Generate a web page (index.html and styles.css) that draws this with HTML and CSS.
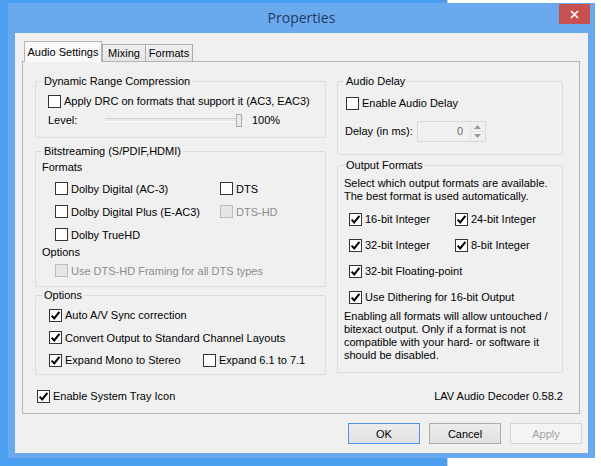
FILE: index.html
```html
<!DOCTYPE html>
<html>
<head>
<meta charset="utf-8">
<title>Properties</title>
<link rel="stylesheet" href="styles.css">
</head>
<body>
<div class="desk-back"></div>
<div class="window">
  <div class="titlebar">
    <span></span>
    <div class="title">Properties</div>
    <div class="close"><svg width="9" height="9" viewBox="0 0 9 9"><path d="M1 1L8 8M8 1L1 8" stroke="#fff" stroke-width="1.7" fill="none"/></svg></div>
  </div>
  <div class="panel">
    <div class="tabs">
      <div class="tab active">Audio Settings</div>
      <div class="tab mixing">Mixing</div>
      <div class="tab formats">Formats</div>
    </div>
    <div class="page">
      <div class="columns">
        <div class="col col-left">
          <div class="group g-drc">
            <div class="gtitle">Dynamic Range Compression</div>
            <div class="row r-drc"><span class="box"></span><span>Apply DRC on formats that support it (AC3, EAC3)</span></div>
            <div class="row r-level">
              <span class="lvl-label">Level:</span>
              <div class="slider"><div class="track"></div><div class="thumb"></div></div>
              <span class="lvl-val">100%</span>
            </div>
          </div>
          <div class="group g-bits">
            <div class="gtitle">Bitstreaming (S/PDIF,HDMI)</div>
            <div class="label">Formats</div>
            <div class="grid bits-grid">
              <div class="row"><span class="box"></span><span>Dolby Digital (AC-3)</span></div>
              <div class="row"><span class="box"></span><span>DTS</span></div>
              <div class="row"><span class="box"></span><span>Dolby Digital Plus (E-AC3)</span></div>
              <div class="row disabled"><span class="box"></span><span>DTS-HD</span></div>
              <div class="row"><span class="box"></span><span>Dolby TrueHD</span></div>
            </div>
            <div class="label">Options</div>
            <div class="row r-framing disabled"><span class="box"></span><span>Use DTS-HD Framing for all DTS types</span></div>
          </div>
          <div class="group g-opts">
            <div class="gtitle">Options</div>
            <div class="row r-o1"><span class="box checked"><svg viewBox="0 0 11 11" width="11" height="11"><path d="M1.6 5.6L4.2 8.4L9.4 1.8" stroke="#000" stroke-width="2" fill="none"/></svg></span><span>Auto A/V Sync correction</span></div>
            <div class="row r-o2"><span class="box checked"><svg viewBox="0 0 11 11" width="11" height="11"><path d="M1.6 5.6L4.2 8.4L9.4 1.8" stroke="#000" stroke-width="2" fill="none"/></svg></span><span>Convert Output to Standard Channel Layouts</span></div>
            <div class="grid opts-grid r-o3">
              <div class="row"><span class="box checked"><svg viewBox="0 0 11 11" width="11" height="11"><path d="M1.6 5.6L4.2 8.4L9.4 1.8" stroke="#000" stroke-width="2" fill="none"/></svg></span><span>Expand Mono to Stereo</span></div>
              <div class="row"><span class="box"></span><span>Expand 6.1 to 7.1</span></div>
            </div>
          </div>
        </div>
        <div class="col col-right">
          <div class="group g-delay">
            <div class="gtitle">Audio Delay</div>
            <div class="row r-delay1"><span class="box"></span><span>Enable Audio Delay</span></div>
            <div class="row r-delay2">
              <span class="delay-label">Delay (in ms):</span>
              <div class="spin">
                <span class="spin-val">0</span>
                <div class="spin-btns">
                  <div class="sb"><svg width="7" height="4" viewBox="0 0 7 4"><path d="M3.5 0L7 4H0Z" fill="#9a9a9a"/></svg></div>
                  <div class="sb"><svg width="7" height="4" viewBox="0 0 7 4"><path d="M0 0H7L3.5 4Z" fill="#9a9a9a"/></svg></div>
                </div>
              </div>
            </div>
          </div>
          <div class="group g-out">
            <div class="gtitle">Output Formats</div>
            <div class="desc desc1">Select which output formats are available.<br>The best format is used automatically.</div>
            <div class="grid out-grid">
              <div class="row"><span class="box checked"><svg viewBox="0 0 11 11" width="11" height="11"><path d="M1.6 5.6L4.2 8.4L9.4 1.8" stroke="#000" stroke-width="2" fill="none"/></svg></span><span>16-bit Integer</span></div>
              <div class="row"><span class="box checked"><svg viewBox="0 0 11 11" width="11" height="11"><path d="M1.6 5.6L4.2 8.4L9.4 1.8" stroke="#000" stroke-width="2" fill="none"/></svg></span><span>24-bit Integer</span></div>
              <div class="row"><span class="box checked"><svg viewBox="0 0 11 11" width="11" height="11"><path d="M1.6 5.6L4.2 8.4L9.4 1.8" stroke="#000" stroke-width="2" fill="none"/></svg></span><span>32-bit Integer</span></div>
              <div class="row"><span class="box checked"><svg viewBox="0 0 11 11" width="11" height="11"><path d="M1.6 5.6L4.2 8.4L9.4 1.8" stroke="#000" stroke-width="2" fill="none"/></svg></span><span>8-bit Integer</span></div>
              <div class="row span2"><span class="box checked"><svg viewBox="0 0 11 11" width="11" height="11"><path d="M1.6 5.6L4.2 8.4L9.4 1.8" stroke="#000" stroke-width="2" fill="none"/></svg></span><span>32-bit Floating-point</span></div>
              <div class="row span2"><span class="box checked"><svg viewBox="0 0 11 11" width="11" height="11"><path d="M1.6 5.6L4.2 8.4L9.4 1.8" stroke="#000" stroke-width="2" fill="none"/></svg></span><span>Use Dithering for 16-bit Output</span></div>
            </div>
            <div class="desc desc2">Enabling all formats will allow untouched /<br>bitexact output. Only if a format is not<br>compatible with your hard- or software it<br>should be disabled.</div>
          </div>
        </div>
      </div>
      <div class="footer">
        <div class="row r-tray"><span class="box checked"><svg viewBox="0 0 11 11" width="11" height="11"><path d="M1.6 5.6L4.2 8.4L9.4 1.8" stroke="#000" stroke-width="2" fill="none"/></svg></span><span>Enable System Tray Icon</span></div>
        <div class="version">LAV Audio Decoder 0.58.2</div>
      </div>
    </div>
    <div class="buttons">
      <div class="btn btn-default">OK</div>
      <div class="btn">Cancel</div>
      <div class="btn btn-disabled">Apply</div>
    </div>
  </div>
</div>
</body>
</html>
```
FILE: styles.css
```css
* { box-sizing: border-box; margin: 0; padding: 0; }
html, body { width: 601px; height: 466px; overflow: hidden; }
body {
  position: relative;
  background: #4a9ff0;
  font: 11px "Liberation Sans", Arial, sans-serif;
  color: #000;
}
.desk-back {
  position: absolute;
  left: 447px; top: 0; right: 0; bottom: 0;
  background: #fff;
  border-left: 1px solid #cfcfcf;
}
.window {
  position: absolute;
  left: 8px; top: 3px;
  width: 587px; height: 455px;
  background: #6ba9ef;
  padding: 0 7px 5px 7px;
  display: flex;
  flex-direction: column;
}
.titlebar {
  height: 30px;
  display: grid;
  grid-template-columns: 1fr auto 1fr;
  align-items: start;
}
.title {
  font: 14px "Open Sans", "Noto Sans", sans-serif;
  line-height: 30px;
  color: #1d3a5e;
}
.close {
  justify-self: end;
  width: 31px; height: 20px;
  margin-top: 1px; margin-right: -2px;
  background: #c75050;
  display: flex; align-items: center; justify-content: center;
}
.panel {
  flex: 1;
  background: #f0f0f0;
  padding: 8px 6px 0 7px;
  display: flex;
  flex-direction: column;
}
.tabs {
  display: flex;
  align-items: flex-end;
  height: 20px;
  margin-left: 2px;
}
.tab {
  height: 17px;
  border: 1px solid #acacac;
  border-bottom: none;
  background: linear-gradient(#f0f0f0, #e5e5e5);
  display: flex; align-items: center; justify-content: center;
  padding-bottom: 1px;
}
.tab.active {
  position: relative; z-index: 1;
  width: 78px; height: 21px;
  margin-bottom: -1px;
  background: #f9f9f9;
  border-color: #b4b4b4;
  padding-bottom: 1px;
}
.tab.mixing { width: 44px; }
.tab.formats { width: 47px; border-left: none; }
.page {
  width: 558px; height: 353px;
  border: 1px solid #b4b4b4;
  background: #f0f0f0;
  padding: 19px 15px 0 12px;
}
.columns { display: flex; gap: 11px; }
.col-left { width: 291px; }
.col-right { width: 226px; }
.group {
  border: 1px solid #dcdcdc;
  border-radius: 2px;
}
.gtitle {
  width: fit-content;
  margin: -7px 0 0 6px;
  padding: 0 2px;
  line-height: 13px;
  background: #f0f0f0;
  white-space: nowrap;
}
.row {
  display: flex;
  align-items: center;
  white-space: nowrap;
}
.box {
  width: 13px; height: 13px;
  border: 1px solid #333;
  background: #fff;
  margin-right: 3px;
  flex: none;
  display: flex;
}
.disabled { color: #8d8d8d; }
.disabled .box { border-color: #bcbcbc; background: #e6e6e6; }
.grid { display: grid; }

/* DRC */
.g-drc { height: 57px; }
.r-drc { margin-top: 3px; height: 20px; padding-left: 12px; }
.r-level { height: 18px; padding-left: 12px; }
.lvl-label { width: 57px; }
.slider { position: relative; width: 138px; height: 14px; display: flex; align-items: center; }
.track { width: 100%; height: 4px; border-top: 1px solid #d4d4d4; border-bottom: 1px solid #f8f8f8; background: #e7e7e7; }
.thumb {
  position: absolute; right: 1px; top: 1px;
  width: 6px; height: 13px;
  border: 1px solid #adadad; background: #e9e9e9;
}
.lvl-val { margin-left: 9px; }

/* Bitstreaming */
.g-bits { height: 136px; margin-top: 13px; }
.label { line-height: 13px; padding-left: 6px; margin-top: 3px; }
.bits-grid { grid-template-columns: 165px auto; grid-auto-rows: 23px; padding-left: 19px; margin-top: 3px; }
.r-framing { height: 23px; padding-left: 19px; }
.g-bits .bits-grid + .label { margin-top: 0; }

/* Options */
.g-opts { height: 80px; margin-top: 8px; }
.r-o1 { margin-top: 2px; height: 22px; padding-left: 13px; }
.r-o2 { height: 23px; padding-left: 13px; }
.opts-grid { grid-template-columns: 154px auto; height: 22px; padding-left: 13px; }

/* Audio delay */
.g-delay { height: 74px; }
.r-delay1 { margin-top: 4px; height: 22px; padding-left: 8px; }
.r-delay2 { margin-top: 3px; height: 28px; padding-left: 7px; }
.delay-label { width: 72px; }
.spin {
  width: 69px; height: 21px;
  border: 1px solid #d9d9d9;
  background: #f0f0f0;
  display: flex; align-items: center; justify-content: flex-end;
  padding: 1px;
}
.spin-val { color: #6d6d6d; margin-right: 7px; }
.spin-btns { width: 14px; height: 17px; display: flex; flex-direction: column; border-left: 1px solid #e2e2e2; }
.sb { flex: 1; display: flex; align-items: center; justify-content: center; }
.sb + .sb { border-top: 1px solid #e2e2e2; }

/* Output formats */
.g-out { height: 208px; margin-top: 10px; }
.desc { line-height: 13px; padding-left: 6px; white-space: nowrap; }
.desc1 { margin-top: 5px; }
.out-grid { grid-template-columns: 106px auto; grid-auto-rows: 26px; padding-left: 11px; margin-top: 3px; }
.span2 { grid-column: 1 / span 2; }

/* footer */
.footer {
  margin-top: 11px; height: 20px;
  display: flex; align-items: center; justify-content: space-between;
  padding: 0 1px 0 2px;
}
.version { white-space: nowrap; }

/* buttons */
.buttons {
  margin-top: 9px;
  display: flex; justify-content: flex-end; gap: 9px;
}
.btn {
  width: 72px; height: 21px;
  border: 1px solid #acacac;
  background: linear-gradient(#ececec, #e1e1e1);
  display: flex; align-items: center; justify-content: center;
}
.btn-default { border-color: #4a97e6; }
.btn-disabled { border-color: #d5d5d5; background: #f4f4f4; color: #a3a3a3; }
```
